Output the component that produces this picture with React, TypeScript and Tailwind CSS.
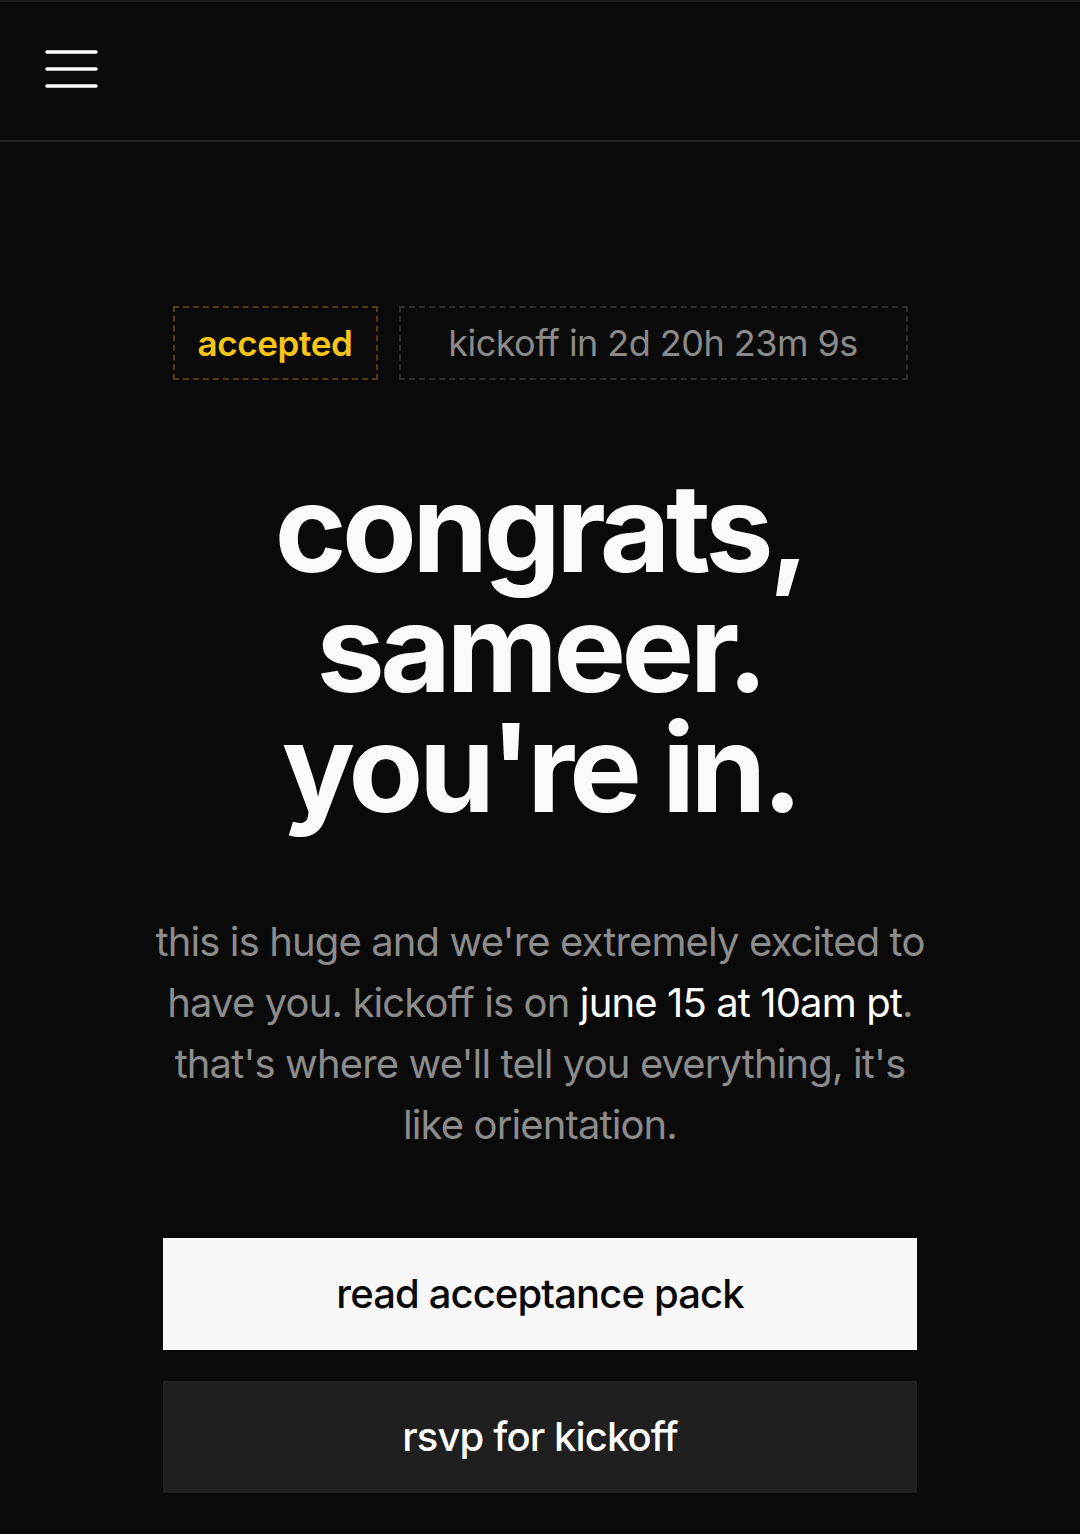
const Hamburger = () => (
  <svg width="54" height="40" viewBox="0 0 54 40" fill="none" stroke="#ffffff" strokeWidth="3.5" strokeLinecap="round">
    <line x1="2" y1="3" x2="51" y2="3" />
    <line x1="2" y1="20" x2="51" y2="20" />
    <line x1="2" y1="37" x2="51" y2="37" />
  </svg>
);

export default function App() {
  return (
    <div
      className="min-h-[1534px] w-full bg-[#0a0a0a] text-white"
      style={{ fontFamily: "Inter, 'Noto Sans', sans-serif" }}
    >
      <header className="flex h-[142px] items-center border-t-2 border-b-2 border-t-[#1c1c1c] border-b-[#242424] px-[45px]">
        <button className="-mt-[4px]">
          <Hamburger />
        </button>
      </header>

      <main className="flex flex-col items-center">
        <div className="mt-[164px] flex gap-[21px]">
          <div className="flex h-[74px] w-[205px] items-center justify-center border-2 border-dashed border-[#4d3f10] text-[35px] font-semibold tracking-[-0.01em] text-[#f5c518]">
            accepted
          </div>
          <div className="flex h-[74px] w-[509px] items-center justify-center border-2 border-dashed border-[#2c2c2c] text-[36px] font-normal tracking-[-0.015em] text-[#8a8a8a]">
            kickoff in 2d 20h 23m 9s
          </div>
        </div>

        <h1 className="mt-[88px] text-center text-[122px] font-bold leading-[120px] tracking-[-0.037em] text-[#fafafa]">
          congrats,
          <br />
          sameer.
          <br />
          you're in.
        </h1>

        <p className="mt-[83px] w-[900px] text-center text-[40px] leading-[61px] tracking-[-0.022em] text-[#8c8c8c]">
          this is huge and we're extremely excited to
          <br />
          have you. kickoff is on <span className="text-white">june 15 at 10am pt</span>.
          <br />
          that's where we'll tell you everything, it's
          <br />
          like orientation.
        </p>

        <div className="mt-[83px] flex w-[754px] flex-col gap-[31px] pb-[41px]">
          <button className="flex h-[112px] items-center justify-center bg-[#f7f7f7] text-[40px] font-medium tracking-[-0.022em] text-[#0a0a0a]">
            read acceptance pack
          </button>
          <button className="flex h-[112px] items-center justify-center bg-[#1f1f1f] text-[40px] font-medium tracking-[-0.022em] text-white">
            rsvp for kickoff
          </button>
        </div>
      </main>
    </div>
  );
}
